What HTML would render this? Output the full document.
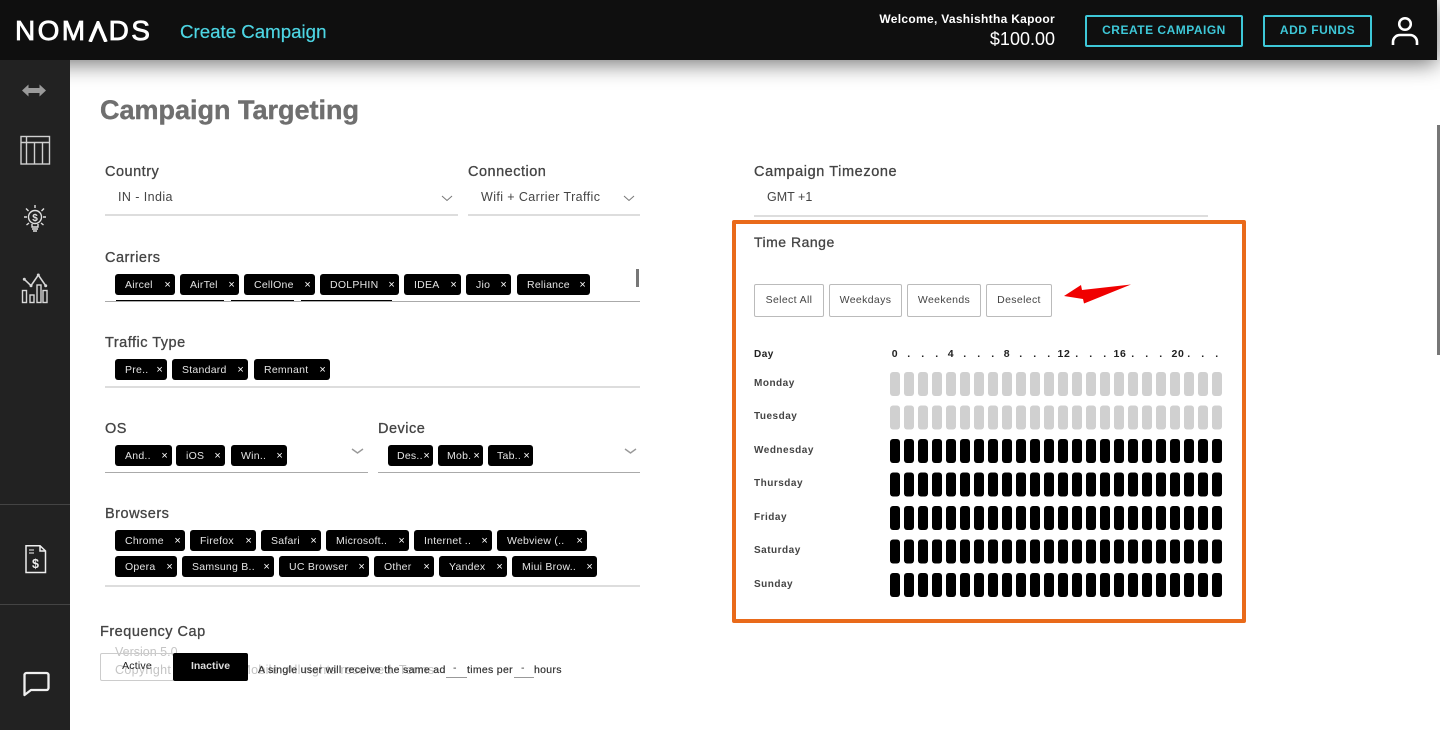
<!DOCTYPE html>
<html><head><meta charset="utf-8"><style>
html,body{margin:0;padding:0;background:#fff;width:1440px;height:730px;overflow:hidden}
body{position:relative;font-family:"Liberation Sans",sans-serif;color:#444}
.a{position:absolute;white-space:nowrap}
#hd{position:absolute;left:0;top:0;width:1437px;height:60px;background:#0f0f0f;box-shadow:0 4px 22px rgba(0,0,0,.55);z-index:3}
#sb{position:absolute;left:0;top:60px;width:70px;height:670px;background:#222;z-index:4}
.l{position:absolute;white-space:nowrap;font-size:14.5px;letter-spacing:.5px;color:#444;line-height:16px;-webkit-text-stroke:.3px #444}
.v{position:absolute;white-space:nowrap;font-size:12.5px;letter-spacing:.42px;color:#444;line-height:14px}
.ln{position:absolute;height:1px;background:#aaa}
.lg{position:absolute;height:2px;background:#ddd}
.t{position:absolute;height:21px;background:#000;border-radius:3px;color:#e4e4e4;font-size:10.5px;letter-spacing:.25px;line-height:22px;padding-left:10px;box-sizing:border-box;white-space:nowrap}
.t i{position:absolute;right:4px;top:0;font-style:normal;font-size:11px;color:#fff}
.b{position:absolute;top:284px;height:33px;box-sizing:border-box;border:1px solid #bbb;border-radius:2px;font-size:10.5px;letter-spacing:.35px;line-height:31px;text-align:center;color:#444}
.d{position:absolute;left:754px;font-size:10px;font-weight:bold;letter-spacing:.5px;color:#444;line-height:12px}
.h{position:absolute;top:348px;width:14px;text-align:center;font-size:10.5px;font-weight:bold;color:#222;line-height:12px;letter-spacing:.6px}
.c{position:absolute;fill:none}
</style></head><body>

<div id="hd">
  <div class="a" style="left:15px;top:15px;font-size:28px;line-height:32px;letter-spacing:2.4px;color:#fff;-webkit-text-stroke:.8px #fff">NOM<span style="position:relative;color:transparent;-webkit-text-stroke:0">A<svg style="position:absolute;left:0;top:6px" width="20" height="21" viewBox="0 0 20 21"><path d="M2 21 L10 2 L18 21" fill="none" stroke="#fff" stroke-width="3.600"/></svg></span>DS</div>
  <div class="a" style="left:180px;top:20px;font-size:18.7px;line-height:24px;color:#4dd5e3;-webkit-text-stroke:.2px #4dd5e3">Create Campaign</div>
  <div class="a" style="right:382px;top:12px;font-size:12px;line-height:14px;font-weight:bold;letter-spacing:.3px;color:#fff">Welcome, Vashishtha Kapoor</div>
  <div class="a" style="right:382px;top:29px;font-size:18px;line-height:21px;color:#fff">$100.00</div>
  <div class="a" style="left:1085px;top:15px;width:158px;height:32px;box-sizing:border-box;border:2px solid #3ec8d8;border-radius:2px;text-align:center;font-size:12px;font-weight:bold;line-height:27px;letter-spacing:.5px;color:#3ec8d8">CREATE CAMPAIGN</div>
  <div class="a" style="left:1263px;top:15px;width:109px;height:32px;box-sizing:border-box;border:2px solid #3ec8d8;border-radius:2px;text-align:center;font-size:12px;font-weight:bold;line-height:27px;letter-spacing:.5px;color:#3ec8d8">ADD FUNDS</div>
  <svg class="c" style="left:1385px;top:10px" width="40" height="40" viewBox="1385 10 40 40"><circle cx="1405" cy="24" r="5.800" stroke="#fff" stroke-width="2.500" fill="none"/><path d="M1393 45 v-3 a7 7 0 0 1 7-7 h10 a7 7 0 0 1 7 7 v3" stroke="#fff" stroke-width="2.600" fill="none"/></svg>
</div>

<div id="sb">
  <div style="position:absolute;left:0;top:444px;width:70px;height:1px;background:#444"></div>
  <div style="position:absolute;left:0;top:544px;width:70px;height:1px;background:#444"></div>
  <svg style="position:absolute;left:0;top:0" width="70" height="670" viewBox="0 60 70 670" fill="none">
    <path d="M22 90.500 L28.500 84.500 V88 H39.500 V84.500 L46 90.500 L39.500 96.500 V93 H28.500 V96.500 Z" fill="#9a9a9a"/>
    <g stroke="#d0d0d0" stroke-width="1.400">
      <rect x="21" y="136.500" width="28.500" height="27.500"/>
      <path d="M21 142.500 H49.500 M26.500 136.500 V164 M34.500 142.500 V164 M42.500 142.500 V164"/>
    </g>
    <g stroke="#e0e0e0" stroke-width="1.400">
      <circle cx="35" cy="217" r="6.500"/>
      <path d="M32 224 V227 H38 V224 M32 229 H38 M33 231 H37" />
      <path d="M35 205 V208 M26 208.500 L28.500 211 M44 208.500 L41.500 211 M24 217 H27 M46 217 H43 M26.500 225 L29 223 M43.500 225 L41 223"/>
    </g>
    <text x="35" y="221" font-size="10" font-weight="bold" fill="#e0e0e0" text-anchor="middle" font-family="Liberation Sans">$</text>
    <g stroke="#d8d8d8" stroke-width="1.400">
      <rect x="22.500" y="290.500" width="4" height="12"/><rect x="30" y="295" width="4" height="7.500"/><rect x="37" y="285" width="4" height="17.500"/><rect x="43" y="290.500" width="4" height="12"/>
      <path d="M24.300 279.300 L31 285.700 L38.300 275 L45.700 285.700" stroke-width="1.600"/>
    </g>
    <g fill="#d8d8d8"><circle cx="24.300" cy="279.300" r="1.500"/><circle cx="31" cy="285.700" r="1.500"/><circle cx="38.300" cy="275" r="1.500"/><circle cx="45.700" cy="285.700" r="1.500"/></g>
    <path d="M26 545.700 H40 L45.500 551 V572.500 H26 Z M40 545.700 V551 H45.500" stroke="#eee" stroke-width="1.500"/>
    <path d="M29 550 H34 M29 553 H34" stroke="#ccc" stroke-width="1.200"/>
    <text x="35.500" y="568" font-size="12.500" font-weight="bold" fill="#eee" text-anchor="middle" font-family="Liberation Sans">$</text>
    <path d="M24.500 695 V675 a2 2 0 0 1 2-2 H46.500 a2 2 0 0 1 2 2 V688 a2 2 0 0 1-2 2 H31 Z" stroke="#f0f0f0" stroke-width="2.300" stroke-linejoin="round"/>
  </svg>
</div>

<div class="a" style="left:1437px;top:125px;width:3px;height:230px;background:#777"></div>

<div class="a" style="left:100px;top:95px;font-size:27px;line-height:30px;font-weight:bold;color:#6f6f6f;-webkit-text-stroke:.4px #6f6f6f">Campaign Targeting</div>

<div class="l" style="left:105px;top:164px">Country</div>
<div class="v" style="left:118px;top:190px">IN - India</div>
<div class="lg" style="left:105px;top:214px;width:353px"></div>
<div class="l" style="left:468px;top:164px">Connection</div>
<div class="v" style="left:481px;top:190px;letter-spacing:.4px">Wifi + Carrier Traffic</div>
<div class="lg" style="left:468px;top:214px;width:172px"></div>
<div class="l" style="left:754px;top:164px;letter-spacing:.6px">Campaign Timezone</div>
<div class="v" style="left:767px;top:190px;letter-spacing:0">GMT +1</div>
<div class="lg" style="left:754px;top:215px;width:454px"></div>

<svg class="c" style="left:0;top:0;z-index:1" width="700" height="480"><path d="M442 196 L447 200.500 L452 196 M624 196 L629 200.500 L634 196" stroke="#777" stroke-width="1" fill="none"/><path d="M352 449 L357.500 453 L363 449 M625 449 L630.500 453 L636 449" stroke="#999" stroke-width="1.400" fill="none"/></svg>

<div class="l" style="left:105px;top:250px">Carriers</div>
<div class="t" style="left:115px;top:274px;width:60px">Aircel<i>×</i></div>
<div class="t" style="left:180px;top:274px;width:59px">AirTel<i>×</i></div>
<div class="t" style="left:244px;top:274px;width:71px">CellOne<i>×</i></div>
<div class="t" style="left:320px;top:274px;width:79px">DOLPHIN<i>×</i></div>
<div class="t" style="left:404px;top:274px;width:57px">IDEA<i>×</i></div>
<div class="t" style="left:466px;top:274px;width:45px">Jio<i>×</i></div>
<div class="t" style="left:517px;top:274px;width:73px">Reliance<i>×</i></div>
<div class="a" style="left:116px;top:300px;width:108px;height:1px;background:#000"></div>
<div class="a" style="left:231px;top:300px;width:63px;height:1px;background:#000"></div>
<div class="a" style="left:301px;top:300px;width:91px;height:1px;background:#000"></div>
<div class="ln" style="left:105px;top:301px;width:535px"></div>
<div class="a" style="left:636px;top:269px;width:3px;height:18px;background:#777"></div>

<div class="l" style="left:105px;top:335px">Traffic Type</div>
<div class="t" style="left:115px;top:359px;width:52px">Pre..<i>×</i></div>
<div class="t" style="left:172px;top:359px;width:76px">Standard<i>×</i></div>
<div class="t" style="left:254px;top:359px;width:76px">Remnant<i>×</i></div>
<div class="lg" style="left:105px;top:386px;width:535px"></div>

<div class="l" style="left:105px;top:421px">OS</div>
<div class="t" style="left:115px;top:445px;width:57px">And..<i>×</i></div>
<div class="t" style="left:176px;top:445px;width:49px">iOS<i>×</i></div>
<div class="t" style="left:231px;top:445px;width:56px">Win..<i>×</i></div>
<div class="ln" style="left:105px;top:472px;width:263px"></div>
<div class="l" style="left:378px;top:421px">Device</div>
<div class="t" style="left:388px;top:445px;width:45px;padding-left:9px">Des..<i style="right:3px">×</i></div>
<div class="t" style="left:438px;top:445px;width:45px;padding-left:9px">Mob.<i style="right:3px">×</i></div>
<div class="t" style="left:488px;top:445px;width:45px;padding-left:9px">Tab..<i style="right:3px">×</i></div>
<div class="ln" style="left:378px;top:472px;width:262px"></div>

<div class="l" style="left:105px;top:506px">Browsers</div>
<div class="t" style="left:115px;top:530px;width:70px">Chrome<i>×</i></div>
<div class="t" style="left:190px;top:530px;width:66px">Firefox<i>×</i></div>
<div class="t" style="left:261px;top:530px;width:60px">Safari<i>×</i></div>
<div class="t" style="left:326px;top:530px;width:83px">Microsoft..<i>×</i></div>
<div class="t" style="left:414px;top:530px;width:78px">Internet ..<i>×</i></div>
<div class="t" style="left:497px;top:530px;width:90px">Webview (..<i>×</i></div>
<div class="t" style="left:115px;top:556px;width:62px">Opera<i>×</i></div>
<div class="t" style="left:182px;top:556px;width:92px">Samsung B..<i>×</i></div>
<div class="t" style="left:279px;top:556px;width:90px">UC Browser<i>×</i></div>
<div class="t" style="left:374px;top:556px;width:60px">Other<i>×</i></div>
<div class="t" style="left:439px;top:556px;width:68px">Yandex<i>×</i></div>
<div class="t" style="left:512px;top:556px;width:85px">Miui Brow..<i>×</i></div>
<div class="lg" style="left:105px;top:585px;width:535px"></div>

<div class="l" style="left:100px;top:624px">Frequency Cap</div>
<div class="a" style="left:115px;top:645px;font-size:12.500px;line-height:14px;color:#c4c4c4">Version 5.0</div>
<div class="a" style="left:115px;top:663px;font-size:12.500px;line-height:14px;letter-spacing:.3px;color:#c4c4c4">Copyright © Nomads Mobile. All rights reserved. Terms</div>
<div class="a" style="left:100px;top:653px;width:74px;height:28px;box-sizing:border-box;border:1px solid #ccc;border-radius:2px;font-size:10.5px;line-height:25px;text-align:center;color:#222;letter-spacing:.2px">Active</div>
<div class="a" style="left:173px;top:653px;width:75px;height:28px;background:#000;border-radius:2px;font-size:10.5px;font-weight:bold;line-height:27px;text-align:center;color:#ddd">Inactive</div>
<div class="a" style="left:258px;top:663px;font-size:10.5px;line-height:14px;letter-spacing:.33px;color:#333;-webkit-text-stroke:.2px #333">A single user will receive the same ad</div>
<div class="a" style="left:453px;top:662px;font-size:10.5px;line-height:13px;color:#333">-</div>
<div class="a" style="left:446px;top:677px;width:21px;height:1px;background:#999"></div>
<div class="a" style="left:467px;top:663px;font-size:10.5px;line-height:14px;letter-spacing:.3px;color:#333;-webkit-text-stroke:.2px #333">times per</div>
<div class="a" style="left:521px;top:662px;font-size:10.5px;line-height:13px;color:#333">-</div>
<div class="a" style="left:514px;top:677px;width:20px;height:1px;background:#999"></div>
<div class="a" style="left:534px;top:663px;font-size:10.5px;line-height:14px;letter-spacing:.3px;color:#333;-webkit-text-stroke:.2px #333">hours</div>

<div class="a" style="left:732px;top:220px;width:514px;height:403px;box-sizing:border-box;border:4px solid #e96a1a;border-radius:2px"></div>
<div class="l" style="left:754px;top:234px;font-size:14px">Time Range</div>
<div class="b" style="left:754px;width:70px">Select All</div>
<div class="b" style="left:829px;width:73px">Weekdays</div>
<div class="b" style="left:907px;width:74px">Weekends</div>
<div class="b" style="left:986px;width:66px">Deselect</div>
<svg class="c" style="left:1060px;top:280px" width="76" height="28" viewBox="1060 280 76 28"><path d="M1064 296 L1081 285 L1082 290 L1131 284.500 L1084 303.500 L1083 299 Z" fill="#f00000"/></svg>

<div class="d" style="top:349px;color:#222">Day</div>
<div class="h" style="left:888px">0</div><div class="h" style="left:902px">.</div><div class="h" style="left:916px">.</div><div class="h" style="left:930px">.</div>
<div class="h" style="left:944px">4</div><div class="h" style="left:958px">.</div><div class="h" style="left:972px">.</div><div class="h" style="left:986px">.</div>
<div class="h" style="left:1000px">8</div><div class="h" style="left:1014px">.</div><div class="h" style="left:1028px">.</div><div class="h" style="left:1042px">.</div>
<div class="h" style="left:1057px">12</div><div class="h" style="left:1070px">.</div><div class="h" style="left:1084px">.</div><div class="h" style="left:1098px">.</div>
<div class="h" style="left:1113px">16</div><div class="h" style="left:1126px">.</div><div class="h" style="left:1140px">.</div><div class="h" style="left:1154px">.</div>
<div class="h" style="left:1171px">20</div><div class="h" style="left:1182px">.</div><div class="h" style="left:1196px">.</div><div class="h" style="left:1210px">.</div>

<div class="d" style="top:378px">Monday</div>
<div class="d" style="top:411px">Tuesday</div>
<div class="d" style="top:445px">Wednesday</div>
<div class="d" style="top:478px">Thursday</div>
<div class="d" style="top:512px">Friday</div>
<div class="d" style="top:545px">Saturday</div>
<div class="d" style="top:579px">Sunday</div>

<svg class="c" style="left:890px;top:372px" width="332" height="225" viewBox="0 0 332 225">
  <defs>
    <pattern id="g" width="14" height="33.500" patternUnits="userSpaceOnUse"><rect width="10" height="24" rx="3" fill="#d0d0d0"/></pattern>
    <pattern id="k" x="0" y="67" width="14" height="33.500" patternUnits="userSpaceOnUse"><rect width="10" height="24" rx="3" fill="#000"/></pattern>
  </defs>
  <rect x="0" y="0" width="332" height="58" fill="url(#g)"/>
  <rect x="0" y="67" width="332" height="158" fill="url(#k)"/>
</svg>

</body></html>
